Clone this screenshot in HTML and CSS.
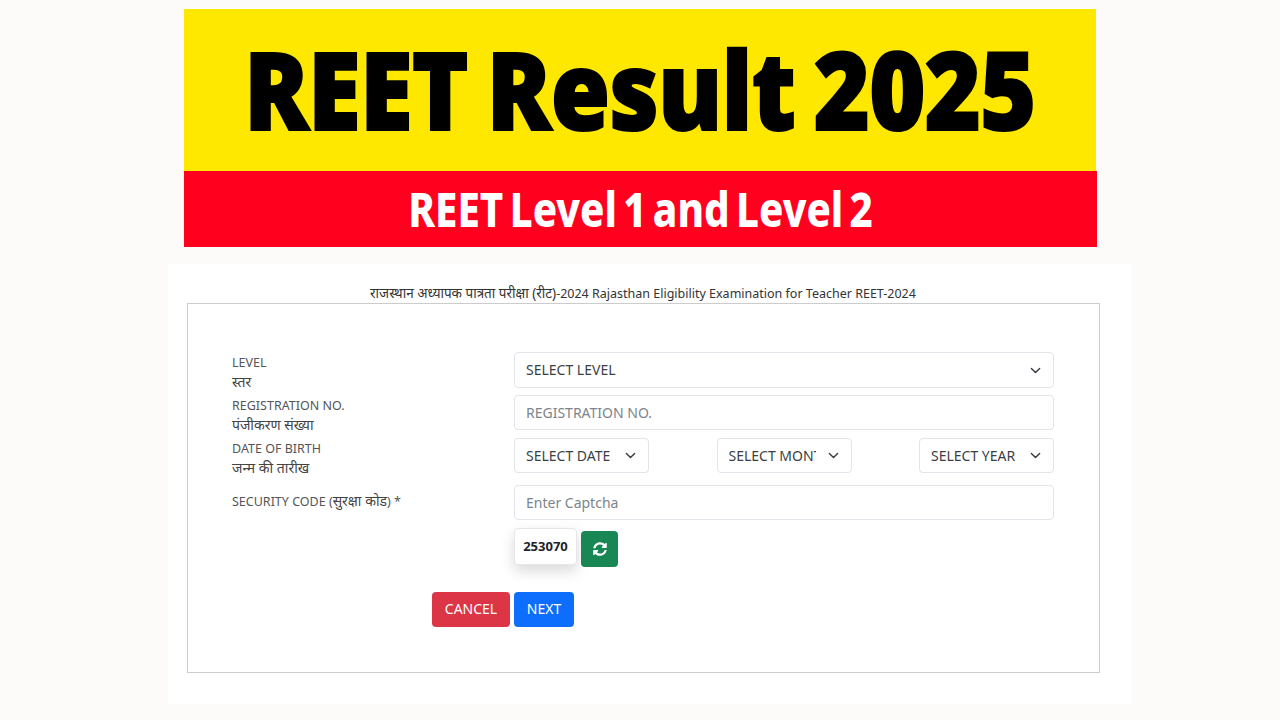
FILE: index.html
```html
<!DOCTYPE html>
<html>

<head>
  <title>REET Result 2025</title>
  <link rel="stylesheet" href="styles.css">
</head>

<body>

  <div class="banner">
    <div class="banner-top">
      <h1>REET Result 2025</h1>
    </div>
    <div class="banner-bottom">
      <h2>REET Level 1 and Level 2</h2>
    </div>
  </div>

  <div class="panel">
    <p class="exam-title"><span class="exam-hi">राजस्थान अध्यापक पात्रता परीक्षा (रीट)</span>-2024 Rajasthan Eligibility Examination for Teacher REET-2024</p>

    <form class="card">
      <div class="row">
        <label class="label">LEVEL<br /><span class="hi">स्तर</span></label>
        <div class="field">
          <select class="control select control-tall">
            <option>SELECT LEVEL</option>
          </select>
        </div>
      </div>

      <div class="row">
        <label class="label">REGISTRATION NO.<br /><span class="hi">पंजीकरण संख्या</span></label>
        <div class="field">
          <input class="control" placeholder="REGISTRATION NO." autocomplete="off" />
        </div>
      </div>

      <div class="row">
        <label class="label">DATE OF BIRTH<br /><span class="hi">जन्म की तारीख</span></label>
        <div class="field dob">
          <select class="control select">
            <option>SELECT DATE</option>
          </select>
          <select class="control select">
            <option>SELECT MONTH</option>
          </select>
          <select class="control select">
            <option>SELECT YEAR</option>
          </select>
        </div>
      </div>

      <div class="row row-captcha">
        <label class="label label-code">SECURITY CODE (<span class="hi">सुरक्षा कोड</span>) *</label>
        <div class="field">
          <input class="control" placeholder="Enter Captcha" autocomplete="off" />
          <div class="captcha">
            <span class="code">253070</span>
            <button type="button" class="btn btn-green" aria-label="Refresh">
              <svg viewBox="0 0 512 512" width="14" height="14" fill="#fff">
                <path d="M370.7 133.3C339.5 104 298.9 88 255.800 88c-77.500.1-144.300 53.200-162.800 126.900-1.300 5.400-6.100 9.200-11.700 9.200H24.100c-7.500 0-13.200-6.800-11.800-14.200C33.900 94.900 134.800 8 256 8c66.400 0 126.800 26.100 171.300 68.700L463 41c15.100-15.100 41-4.400 41 17v134c0 13.300-10.700 24-24 24H346c-21.400 0-32.100-25.900-17-41l41.700-41.700zM32 296h134c21.400 0 32.100 25.900 17 41l-41.700 41.700c31.200 29.300 71.800 45.300 114.900 45.300 77.400-.1 144.300-53.100 162.800-126.800 1.300-5.400 6.100-9.200 11.700-9.200h57.300c7.500 0 13.200 6.800 11.800 14.200C478.100 417.100 377.200 504 256 504c-66.400 0-126.800-26.100-171.300-68.700L49 471c-15.100 15.100-41 4.400-41-17V320c0-13.300 10.700-24 24-24z"/>
              </svg>
            </button>
          </div>
        </div>
      </div>

      <div class="actions">
        <button type="button" class="btn btn-red">CANCEL</button>
        <button type="button" class="btn btn-blue">NEXT</button>
      </div>
    </form>
  </div>

</body>

</html>
```

FILE: styles.css
```css
body {
  margin: 0;
  height: 720px;
  overflow: hidden;
  background: #fdfbf9;
  font-family: "Noto Sans", "Open Sans", sans-serif;
  color: #212529;
}

/* banner image at the top */
.banner {
  width: 913px;
  margin-left: 184px;
  padding-top: 9px;
}
.banner-top {
  background: #ffe800;
  width: 912px;
  height: 162px;
  display: flex;
  align-items: center;
  justify-content: center;
}
.banner-top h1 {
  margin: 0 0 3px;
  font-size: 108px;
  font-weight: 900;
  line-height: 1;
  letter-spacing: -1px;
  color: #000;
  white-space: nowrap;
  word-spacing: -6px;
  -webkit-text-stroke: 2px #000;
  transform: scaleX(0.89);
}
.banner-bottom {
  background: #ff001e;
  height: 76px;
  display: flex;
  align-items: center;
  justify-content: center;
}
.banner-bottom h2 {
  margin: 0;
  font-size: 48px;
  font-weight: 800;
  line-height: 1;
  color: #fff;
  white-space: nowrap;
  word-spacing: -5px;
  transform: scaleX(0.84);
}

/* form panel */
.panel {
  width: 964px;
  height: 440px;
  margin: 17px 0 0 168px;
  background: #fff;
  padding-top: 20px;
  box-sizing: border-box;
}
.exam-title {
  margin: 0;
  height: 19px;
  line-height: 18px;
  font-size: 12.500px;
  text-align: center;
  padding-right: 14px;
  white-space: nowrap;
  color: #333;
}
.exam-hi {
  font-size: 13.500px;
}
.card {
  width: 913px;
  height: 370px;
  margin-left: 19px;
  box-sizing: border-box;
  border: 1px solid #ccc;
  padding: 48px 45px 0 44px;
}

.row {
  display: flex;
  height: 43px;
}
.row-captcha {
  height: auto;
  margin-top: 4px;
}
.label {
  width: 282px;
  flex: none;
  font-size: 12.500px;
  line-height: 19px;
  color: #555;
  padding-top: 1px;
}
.label-code {
  padding-top: 6px;
}
.hi {
  color: #444;
  font-size: 14px;
}
.field {
  flex: 1;
}
.dob {
  display: flex;
  justify-content: space-between;
}
.dob .control {
  width: 135px;
}

.control {
  display: block;
  width: 100%;
  height: 35px;
  box-sizing: border-box;
  padding: 0 11px 1px;
  border: 1px solid #e1e4e8;
  border-radius: 4px;
  background: #fff;
  font-family: inherit;
  font-size: 14px;
  color: #3a3f44;
}
.control-tall {
  height: 36px;
}
.control::placeholder {
  color: #7d858c;
}
.select {
  appearance: none;
  padding-right: 35px;
  background-image: url("data:image/svg+xml,%3csvg xmlns='http://www.w3.org/2000/svg' viewBox='0 0 16 16'%3e%3cpath fill='none' stroke='%23343a40' stroke-linecap='round' stroke-linejoin='round' stroke-width='2' d='m2 5 6 6 6-6'/%3e%3c/svg%3e");
  background-repeat: no-repeat;
  background-position: right 12px center;
  background-size: 11px 11px;
}

.captcha {
  display: flex;
  align-items: flex-start;
  gap: 4px;
  margin-top: 8px;
}
.code {
  width: 63px;
  height: 37px;
  box-sizing: border-box;
  border: 1px solid #e6e6e6;
  border-radius: 4px;
  background: #fff;
  box-shadow: 0 6px 14px rgba(0, 0, 0, 0.15);
  font-size: 13px;
  font-weight: 700;
  line-height: 35px;
  text-align: center;
}

.btn {
  border: none;
  border-radius: 4px;
  color: #fff;
  font-family: inherit;
  font-size: 14px;
  height: 35px;
  padding: 0 0 2px;
}
.btn-green {
  width: 37px;
  height: 36px;
  margin-top: 3px;
  padding: 0;
  background: #198754;
  display: flex;
  align-items: center;
  justify-content: center;
}
.btn-red {
  width: 78px;
  background: #dc3545;
}
.btn-blue {
  width: 60px;
  background: #0d6efd;
}
.actions {
  display: flex;
  gap: 4px;
  margin: 25px 0 0 200px;
}
```
